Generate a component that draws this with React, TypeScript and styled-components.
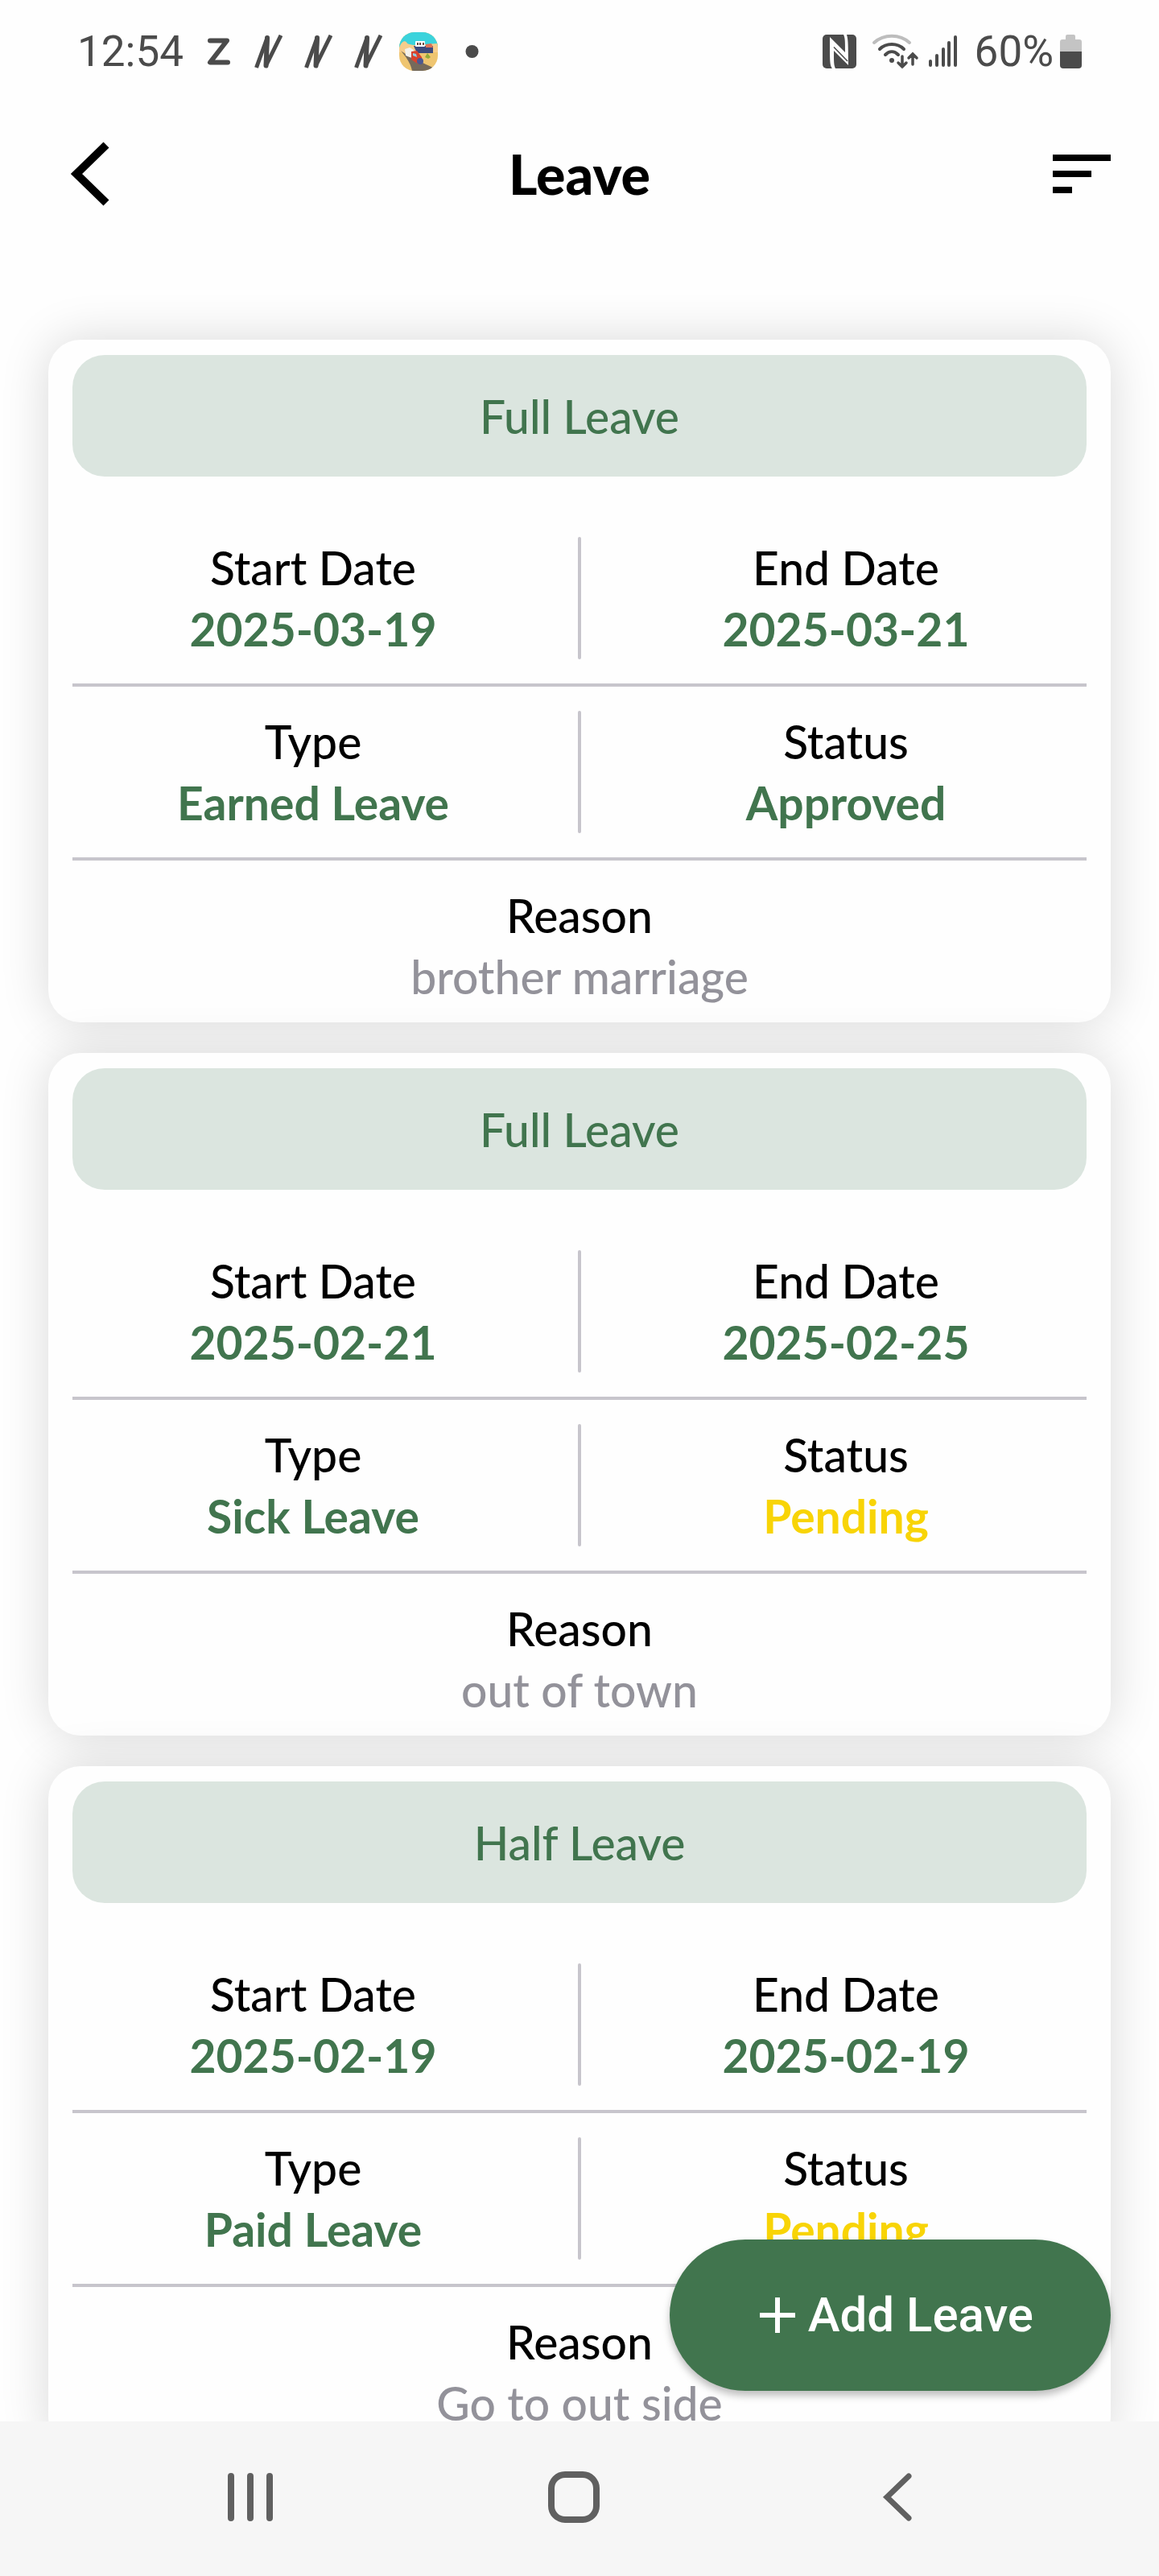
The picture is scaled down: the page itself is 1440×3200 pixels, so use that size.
import React from "react";
import styled, { createGlobalStyle } from "styled-components";

const GREEN = "#41754e";
const YELLOW = "#f8d406";
const INK = "#4b4b4b";

const GlobalStyle = createGlobalStyle`
  *, *::before, *::after { box-sizing: border-box; }
  html, body, #root { height: 100%; }
  body { margin: 0; background: #fff; }
  button { font: inherit; color: inherit; border: 0; padding: 0; background: none; cursor: pointer; }
  svg { display: block; flex: none; }
`;

const Screen = styled.div`
  display: flex;
  flex-direction: column;
  height: 100vh;
  overflow: hidden;
  background: #fefefe;
  color: #000;
  font-family: Lato, "Open Sans", sans-serif;
`;

const StatusBar = styled.div`
  display: flex;
  flex: none;
  align-items: center;
  justify-content: space-between;
  height: 128px;
  padding: 0 96px;
  color: ${INK};
  font-family: Roboto, sans-serif;
  font-size: 53px;
  line-height: 64px;
`;

const StatusGroup = styled.div<{ $gap: number }>`
  display: flex;
  align-items: center;
  gap: ${(p) => p.$gap}px;
`;

const Header = styled.header`
  display: grid;
  flex: none;
  grid-template-columns: 96px 1fr 96px;
  align-items: center;
  height: 176px;
  padding: 0 60px;
`;

const Title = styled.h1`
  margin: 0;
  font-size: 68px;
  font-weight: 900;
  line-height: 80px;
  text-align: center;
`;

const IconButton = styled.button<{ $end?: boolean }>`
  display: flex;
  align-items: center;
  justify-content: ${(p) => (p.$end ? "flex-end" : "flex-start")};
  height: 96px;
`;

const Content = styled.main`
  position: relative;
  display: flex;
  flex: 1;
  flex-direction: column;
  min-height: 0;
`;

const CardList = styled.div`
  display: flex;
  flex: 1;
  flex-direction: column;
  gap: 38px;
  min-height: 0;
  padding: 118px 60px 0;
  overflow: hidden;
`;

const Card = styled.article`
  flex: none;
  padding: 19px 30px;
  border-radius: 40px;
  background: #fefefe;
  box-shadow: 0 0 60px rgba(0, 0, 0, 0.15);
`;

const Banner = styled.h2`
  display: flex;
  align-items: center;
  justify-content: center;
  height: 151px;
  margin: 0 0 45px;
  border-radius: 40px;
  background: #dbe5df;
  color: ${GREEN};
  font-size: 57px;
  font-weight: 500;
`;

const Row = styled.div`
  display: grid;
  grid-template-columns: 1fr 4px 1fr;
  column-gap: 30px;
  padding: 30px 0;
  border-bottom: 4px solid #c7c5cc;
`;

const Divider = styled.div`
  border-radius: 2px;
  background: #c7c5cc;
`;

const ReasonRow = styled.div`
  padding-top: 30px;
`;

const Field = styled.div`
  display: flex;
  flex-direction: column;
  align-items: center;
  font-size: 57px;
  font-weight: 500;
  line-height: 76px;
`;

const Value = styled.span<{ $color: string; $bold?: boolean }>`
  color: ${(p) => p.$color};
  font-weight: ${(p) => (p.$bold ? 700 : 500)};
`;

const AddButton = styled.button`
  position: absolute;
  right: 60px;
  bottom: 38px;
  display: flex;
  align-items: center;
  justify-content: center;
  gap: 16px;
  height: 188px;
  padding: 0 96px 0 112px;
  border-radius: 94px;
  background: ${GREEN};
  box-shadow: 0 6px 10px rgba(0, 0, 0, 0.25);
  color: #fff;
  font-family: Roboto, sans-serif;
  font-size: 60px;
  font-weight: 500;
  line-height: 72px;
`;

const NavBar = styled.nav`
  display: flex;
  flex: none;
  align-items: center;
  justify-content: space-between;
  height: 192px;
  padding: 0 304px 4px 280px;
  background: #f6f6f6;
`;

const NavButton = styled.button`
  display: flex;
  align-items: center;
  justify-content: center;
`;

const ZIcon = () => (
  <svg width="42" height="34" viewBox="0 0 42 34" fill="none" stroke={INK} strokeWidth="6" strokeLinecap="round" strokeLinejoin="round">
    <path d="M13 3.500H34L13 30.500H35" />
  </svg>
);

const SlashIcon = () => (
  <svg width="42" height="42" viewBox="0 0 42 42" fill="none" stroke={INK} strokeWidth="5" strokeLinecap="butt" strokeLinejoin="round">
    <path d="M8.500 41L22 4L20.500 38.500L39 1" />
    <path d="M22 4L20.500 38.500" strokeWidth="6" strokeLinecap="round" />
  </svg>
);

const GameIcon = () => (
  <svg width="48" height="48" viewBox="0 0 48 48">
    <clipPath id="tile"><rect width="48" height="48" rx="19" /></clipPath>
    <g clipPath="url(#tile)">
      <rect width="48" height="48" fill="#efc570" />
      <rect width="48" height="19" fill="#3bd3dc" />
      <path d="M0 19C3 11 8 9 10 14C18 18 30 15 48 14V25H0Z" fill="#f6cd8c" />
      <path d="M18 17H42V26H22Z" fill="#3d4a7c" />
      <path d="M33 15L40 14L42 19H33Z" fill="#dc7257" />
      <rect x="20" y="11" width="12" height="7" rx="1" fill="#fff" />
      <path d="M22 13h2v3h-2zM25 13h2v3h-2zM29 13h2v3h-2z" fill="#6a4d43" />
      <path d="M2 23C14 32 32 39 44 45V48H16C14 38 8 30 2 23Z" fill="#756a5b" />
      <path d="M7 21L13 19L18 22V33L8 29Z" fill="#f3f1ec" />
      <path d="M15 24L22 23L28 31L29 37L24 40L15 34Z" fill="#d8432d" />
      <path d="M17 26L21 27L22 31L17 29Z" fill="#8fcfe4" />
      <circle cx="26" cy="36" r="4" fill="#4c5890" />
      <path d="M32 31L35 26L39 31L36 33Z" fill="#92ab38" />
    </g>
  </svg>
);

const NfcIcon = () => (
  <svg width="53" height="42" viewBox="0 0 53 42">
    <rect width="42" height="42" rx="5" fill={INK} />
    <path d="M9 3L28 22C28 8 28 4 26 0H30C31.500 5 32 9 32 38L14 20C14 34 14 38 16 42H12C9 38 9 34 9 3Z" fill="#fefefe" />
    <path d="M14 15.500L31 33" stroke={INK} strokeWidth="1.500" />
  </svg>
);

const WifiIcon = () => (
  <svg width="63" height="44" viewBox="0 0 63 44" fill="none" stroke={INK} strokeWidth="4" strokeLinecap="round">
    <path d="M3 11C15 0 35 0 47 11" stroke="#bdbdbd" />
    <path d="M10 19C18 11 32 11 40 19" />
    <path d="M17 26C22 21 28 21 33 26" />
    <circle cx="25" cy="33" r="3" fill={INK} stroke="none" />
    <path d="M38 28V41M33 36L38 41L43 36M51 38V25M46 30L51 25L56 30" strokeWidth="3.500" />
  </svg>
);

const SignalIcon = () => (
  <svg width="49" height="40" viewBox="0 0 49 40" fill={INK}>
    <rect x="0" y="30" width="4" height="9" rx="2" />
    <rect x="8" y="23" width="4" height="16" rx="2" />
    <rect x="16" y="15" width="4" height="24" rx="2" />
    <rect x="23" y="7" width="4" height="32" rx="2" />
    <rect x="31" y="0" width="4" height="39" rx="2" />
  </svg>
);

const BatteryIcon = () => (
  <svg width="27" height="42" viewBox="0 0 27 42">
    <path d="M7 2q0-2 2-2h8q2 0 2 2v4h5q3 0 3 3v12H0V9q0-3 3-3h4Z" fill="#c4c4c4" />
    <path d="M0 21H27V38q0 4-4 4H4q-4 0-4-4Z" fill={INK} />
  </svg>
);

const MoreDot = () => (
  <svg width="45" height="18" viewBox="0 0 45 18">
    <circle cx="22.500" cy="9" r="8" fill={INK} />
  </svg>
);

type Leave = {
  kind: string;
  start: string;
  end: string;
  type: string;
  status: "Approved" | "Pending";
  reason: string;
};

const leaves: Leave[] = [
  { kind: "Full Leave", start: "2025-03-19", end: "2025-03-21", type: "Earned Leave", status: "Approved", reason: "brother marriage" },
  { kind: "Full Leave", start: "2025-02-21", end: "2025-02-25", type: "Sick Leave", status: "Pending", reason: "out of town" },
  { kind: "Half Leave", start: "2025-02-19", end: "2025-02-19", type: "Paid Leave", status: "Pending", reason: "Go to out side" },
];

function LeaveCard({ leave }: { leave: Leave }) {
  return (
    <Card>
      <Banner>{leave.kind}</Banner>
      <Row>
        <Field>
          <span>Start Date</span>
          <Value $bold $color={GREEN}>{leave.start}</Value>
        </Field>
        <Divider />
        <Field>
          <span>End Date</span>
          <Value $bold $color={GREEN}>{leave.end}</Value>
        </Field>
      </Row>
      <Row>
        <Field>
          <span>Type</span>
          <Value $bold $color={GREEN}>{leave.type}</Value>
        </Field>
        <Divider />
        <Field>
          <span>Status</span>
          <Value $bold $color={leave.status === "Approved" ? GREEN : YELLOW}>{leave.status}</Value>
        </Field>
      </Row>
      <ReasonRow>
        <Field>
          <span>Reason</span>
          <Value $color="#93929a">{leave.reason}</Value>
        </Field>
      </ReasonRow>
    </Card>
  );
}

export default function App() {
  return (
    <>
      <GlobalStyle />
      <Screen>
        <StatusBar>
          <StatusGroup $gap={20}>
            <span>12:54</span>
            <ZIcon />
            <SlashIcon />
            <SlashIcon />
            <SlashIcon />
            <GameIcon />
            <MoreDot />
          </StatusGroup>
          <StatusGroup $gap={8}>
            <NfcIcon />
            <WifiIcon />
            <SignalIcon />
            <span>60%</span>
            <BatteryIcon />
          </StatusGroup>
        </StatusBar>
        <Header>
          <IconButton aria-label="Back">
            <svg width="80" height="82" viewBox="0 0 80 82" fill="none" stroke="#000" strokeWidth="10">
              <path d="M72 5L35 41L72 77" />
            </svg>
          </IconButton>
          <Title>Leave</Title>
          <IconButton $end aria-label="Sort">
            <svg width="72" height="48" viewBox="0 0 72 48" fill="#000">
              <path d="M0 0H72V8H0zM0 20H48V28H0zM0 40H24V48H0z" />
            </svg>
          </IconButton>
        </Header>
        <Content>
          <CardList>
            {leaves.map((leave) => (
              <LeaveCard key={leave.start} leave={leave} />
            ))}
          </CardList>
          <AddButton>
            <svg width="44" height="44" viewBox="0 0 44 44" fill="none" stroke="#fff" strokeWidth="6">
              <path d="M22 0V44M0 22H44" />
            </svg>
            Add Leave
          </AddButton>
        </Content>
        <NavBar>
          <NavButton aria-label="Recent apps">
            <svg width="60" height="64" viewBox="0 0 60 64" fill="none" stroke="#606060" strokeWidth="8" strokeLinecap="round">
              <path d="M7 6V58M31 6V58M55 6V58" />
            </svg>
          </NavButton>
          <NavButton aria-label="Home">
            <svg width="76" height="66" viewBox="0 0 76 66" fill="none" stroke="#606060" strokeWidth="8">
              <rect x="5" y="5" width="56" height="56" rx="17" />
            </svg>
          </NavButton>
          <NavButton aria-label="Go back">
            <svg width="40" height="64" viewBox="0 0 40 64" fill="none" stroke="#606060" strokeWidth="7" strokeLinecap="round">
              <path d="M33 6L6 32L33 58" />
            </svg>
          </NavButton>
        </NavBar>
      </Screen>
    </>
  );
}
